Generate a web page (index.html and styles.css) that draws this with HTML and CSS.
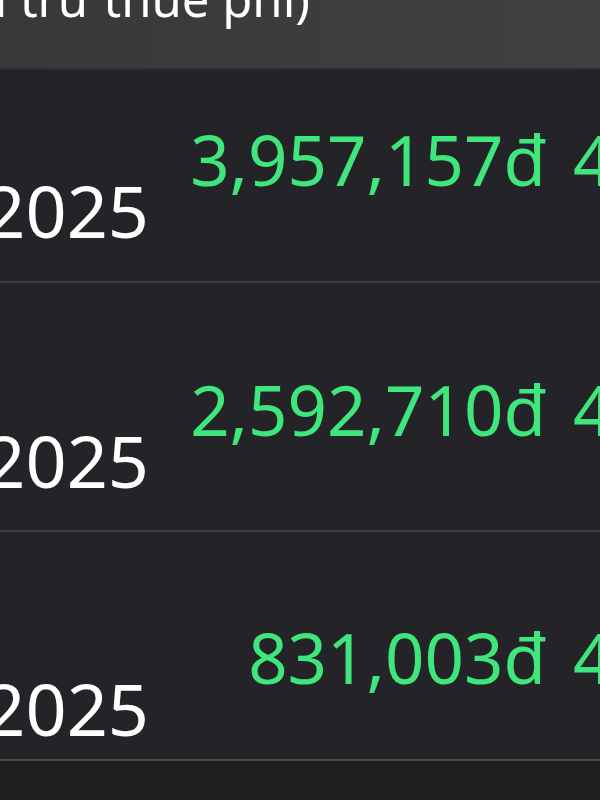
FILE: index.html
```html
<!DOCTYPE html>
<html lang="vi">
<head>
<meta charset="utf-8">
<title>Lợi nhuận</title>
<link rel="stylesheet" href="styles.css">
</head>
<body>
<div class="screen">
  <div class="header">
    <div class="header-text">Lợi nhuận (sau trừ thuế phí)</div>
  </div>
  <div class="list">
    <div class="row row-1">
      <div class="date"><span>Tháng 1 năm 2025</span></div>
      <div class="amount">3,957,157đ</div>
      <div class="extra">4.12%</div>
    </div>
    <div class="row row-2">
      <div class="date"><span>Tháng 2 năm 2025</span></div>
      <div class="amount">2,592,710đ</div>
      <div class="extra">4.05%</div>
    </div>
    <div class="row row-3">
      <div class="date"><span>Tháng 3 năm 2025</span></div>
      <div class="amount">831,003đ</div>
      <div class="extra">4.01%</div>
    </div>
  </div>
</div>
</body>
</html>
```

FILE: styles.css
```css
html, body {
  margin: 0;
  padding: 0;
  background: #1f1f1f;
  overflow: hidden;
}

.screen {
  width: 600px;
  height: 800px;
  overflow: hidden;
  font-family: "Noto Sans", "Open Sans", sans-serif;
}

.header {
  height: 68px;
  background: linear-gradient(90deg, #38383b 0%, #3d3d40 60%, #404043 100%);
  border-bottom: 2px solid #2d2d30;
  overflow: hidden;
  display: flex;
  justify-content: flex-end;
  padding-right: 290px;
}

.header-text {
  font-size: 49px;
  line-height: 49px;
  color: #ffffff;
  white-space: nowrap;
  margin-top: -26px;
  flex-shrink: 0;
}

.list {
  background: #232327;
}

.row {
  display: grid;
  grid-template-columns: 149px 370px 1fr;
  column-gap: 27px;
  align-items: start;
  white-space: nowrap;
  border-bottom: 2px solid #3a3d44;
  background: #242428;
}

.row-1 { padding-top: 55px; padding-bottom: 35px; }
.row-2 { padding-top: 92px; padding-bottom: 34px; }
.row-3 { padding-top: 91px; padding-bottom: 15px; border-bottom-color: #4a4a4e; }

.date {
  display: flex;
  justify-content: flex-end;
  font-size: 72px;
  line-height: 72px;
  color: #ffffff;
  margin-top: 49px;
}

.date span {
  flex-shrink: 0;
}

.amount {
  font-size: 69px;
  line-height: 69px;
  color: #3ee67b;
  text-align: right;
}

.extra {
  font-size: 69px;
  line-height: 69px;
  color: #3ee67b;
  overflow: hidden;
}
```
